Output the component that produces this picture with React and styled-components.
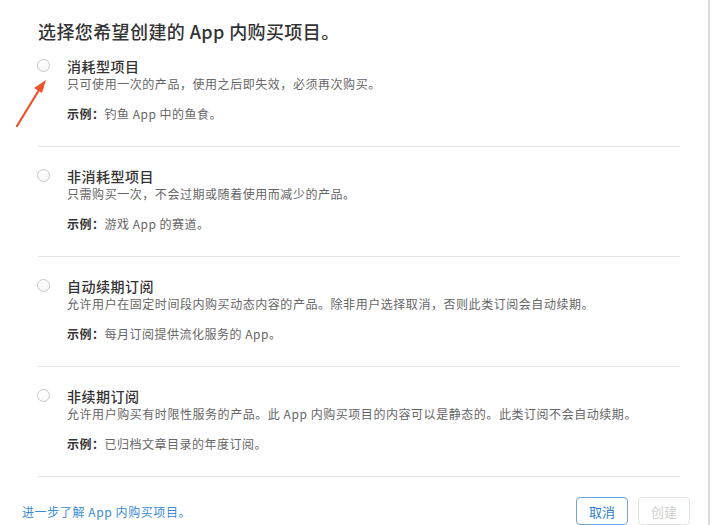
import styled, { createGlobalStyle } from 'styled-components';

const GlobalStyle = createGlobalStyle`
  html, body {
    margin: 0;
    padding: 0;
    background: #fff;
  }
  body {
    font-family: "Noto Sans CJK SC", "Noto Sans", sans-serif;
    -webkit-font-smoothing: antialiased;
  }
`;

const items = [
  {
    title: '消耗型项目',
    desc: '只可使用一次的产品，使用之后即失效，必须再次购买。',
    example: '钓鱼 App 中的鱼食。',
  },
  {
    title: '非消耗型项目',
    desc: '只需购买一次，不会过期或随着使用而减少的产品。',
    example: '游戏 App 的赛道。',
  },
  {
    title: '自动续期订阅',
    desc: '允许用户在固定时间段内购买动态内容的产品。除非用户选择取消，否则此类订阅会自动续期。',
    example: '每月订阅提供流化服务的 App。',
  },
  {
    title: '非续期订阅',
    desc: '允许用户购买有时限性服务的产品。此 App 内购买项目的内容可以是静态的。此类订阅不会自动续期。',
    example: '已归档文章目录的年度订阅。',
  },
];

const Page = styled.div`
  position: relative;
  width: 714px;
  height: 525px;
  overflow: hidden;
  background: #fff;
`;

const Panel = styled.div`
  width: 708px;
  height: 525px;
  border-right: 2px solid #dcdcdc;
  display: flex;
  flex-direction: column;
`;

const Main = styled.div`
  padding: 19px 28px 0 38px;
`;

const Heading = styled.h1`
  margin: 0;
  font-size: 18px;
  line-height: 24px;
  font-weight: 500;
  color: #333;
  letter-spacing: 0.4px;
`;

const List = styled.div`
  margin-top: 13px;
`;

const Item = styled.label`
  display: flex;
  align-items: flex-start;
  padding: ${p => (p.$first ? '0' : '19px')} 0 24px;
  border-bottom: 1px solid #e6e6e6;
`;

const Radio = styled.span`
  flex: none;
  width: 11px;
  height: 11px;
  margin: 3px 17px 0 -1px;
  border: 1px solid #c8c8c8;
  border-radius: 50%;
  background: linear-gradient(#fff, #f6f6f6);
`;

const Body = styled.div`
  display: flex;
  flex-direction: column;
`;

const ItemTitle = styled.div`
  font-size: 14px;
  line-height: 20px;
  font-weight: 500;
  color: #333;
  letter-spacing: 0.5px;
`;

const Desc = styled.div`
  font-size: 12px;
  line-height: 16px;
  color: #666;
  letter-spacing: 0.55px;
`;

const Example = styled.div`
  margin-top: 14px;
  font-size: 12px;
  line-height: 16px;
  color: #666;
  letter-spacing: 0.5px;

  b {
    color: #333;
    font-weight: 600;
  }
`;

const Footer = styled.div`
  display: flex;
  align-items: center;
  justify-content: space-between;
  padding: 20px 18px 0 22px;
`;

const Link = styled.a`
  font-size: 12px;
  color: #3a8ad6;
  text-decoration: none;
  letter-spacing: 0.6px;
  cursor: pointer;
`;

const Buttons = styled.div`
  display: flex;
  gap: 10px;
`;

const Button = styled.button`
  width: 52px;
  height: 28px;
  padding: 0;
  border-radius: 4px;
  background: #fff;
  font-family: inherit;
  font-size: 13px;
  border: 1px solid ${p => (p.$disabled ? '#e2e2e2' : '#6ea4dc')};
  color: ${p => (p.$disabled ? '#cfcfcf' : '#2f7dd1')};
`;

const Arrow = styled.svg`
  position: absolute;
  left: 12px;
  top: 76px;
`;

export default function App() {
  return (
    <Page>
      <GlobalStyle />
      <Panel>
        <Main>
          <Heading>选择您希望创建的 App 内购买项目。</Heading>
          <List>
            {items.map((it, i) => (
              <Item key={it.title} $first={i === 0}>
                <Radio />
                <Body>
                  <ItemTitle>{it.title}</ItemTitle>
                  <Desc>{it.desc}</Desc>
                  <Example>
                    <b>示例：</b>
                    {it.example}
                  </Example>
                </Body>
              </Item>
            ))}
          </List>
        </Main>
        <Footer>
          <Link>进一步了解 App 内购买项目。</Link>
          <Buttons>
            <Button>取消</Button>
            <Button $disabled>创建</Button>
          </Buttons>
        </Footer>
      </Panel>
      <Arrow width="40" height="54" viewBox="0 0 40 54">
        <path d="M5 50 L27 14" stroke="#f0522a" strokeWidth="2.2" strokeLinecap="round" />
        <polygon points="34,4 22,12 30,17" fill="#f0522a" />
      </Arrow>
    </Page>
  );
}
